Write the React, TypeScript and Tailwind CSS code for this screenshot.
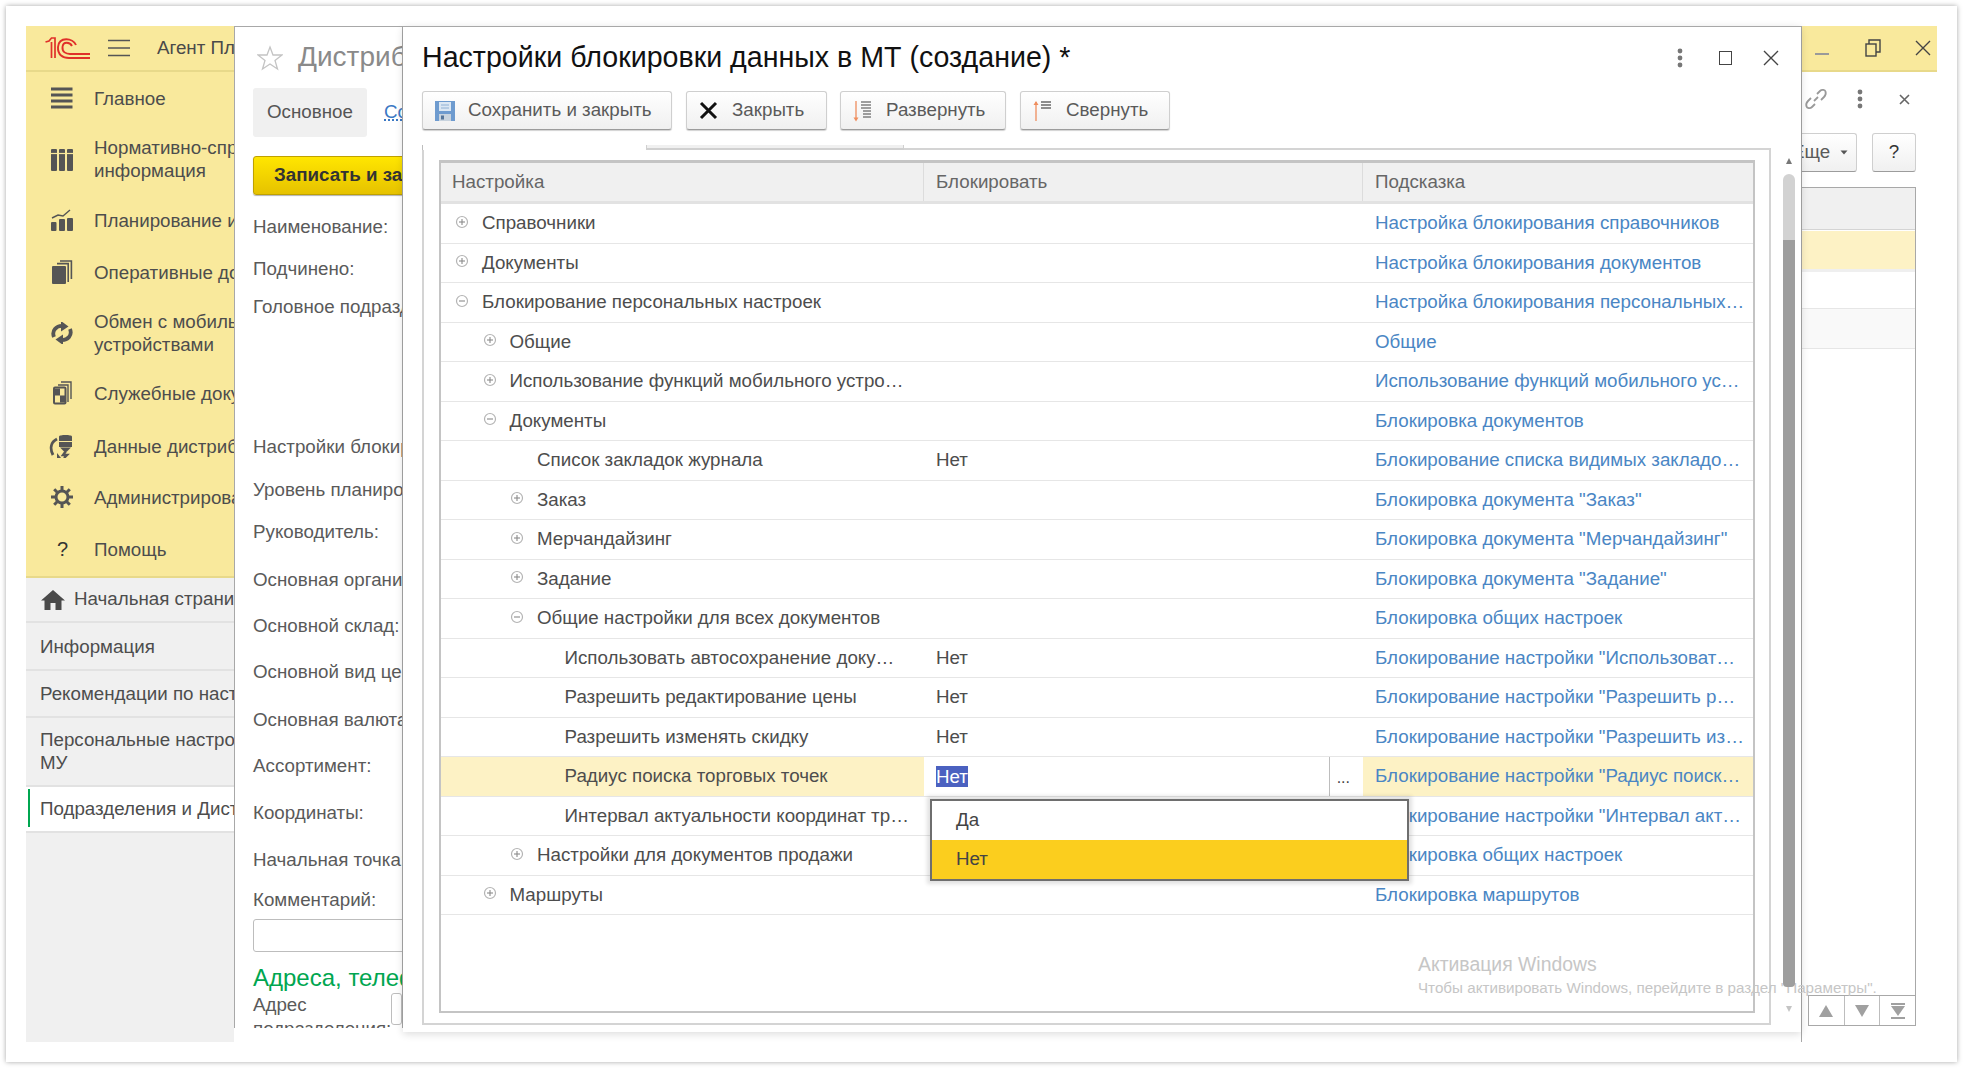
import React from 'react';

const FONT = "font-['Liberation_Sans',Arial,sans-serif]";

function Logo() {
  return (
    <svg width="46" height="24" viewBox="0 0 46 24" fill="none" className="shrink-0">
      <path d="M0.5 6 L4 5 L6.5 2 H10 V22" stroke="#e0302a" strokeWidth="1.7" fill="none" />
      <path d="M6.5 6 V22" stroke="#e0302a" strokeWidth="1.7" fill="none" />
      <path d="M31 9 C28 2 14 0 13 11 C12.5 19 18 22 24 22 H45" stroke="#e0302a" strokeWidth="1.9" fill="none" />
      <path d="M27 10 C25 6 18 5 17.5 11 C17 16 21 18 25 18 H45" stroke="#e0302a" strokeWidth="1.9" fill="none" />
    </svg>
  );
}

function Burger() {
  return (
    <svg width="22" height="18" viewBox="0 0 22 18" className="shrink-0">
      <path d="M0 1.5H22M0 9H22M0 16.5H22" stroke="#555" strokeWidth="1.6" />
    </svg>
  );
}

const ic = '#555555';
const SideIcons: Record<string, React.ReactNode> = {
  main: (
    <svg width="22" height="22" viewBox="0 0 22 22"><path d="M0 2h21.5M0 8h21.5M0 14h21.5M0 20h21.5" stroke={ic} strokeWidth="3" /></svg>
  ),
  norm: (
    <svg width="22" height="22" viewBox="0 0 22 22" fill={ic}><rect y="0" width="6" height="22" rx="1" /><rect x="8" y="0" width="6" height="22" rx="1" /><rect x="16" y="0" width="6" height="22" rx="1" /><path d="M0 4.5h22" stroke="#f9e99c" strokeWidth="1.2" /></svg>
  ),
  plan: (
    <svg width="22" height="22" viewBox="0 0 22 22" fill={ic}><rect y="13" width="5.5" height="9" rx="1" /><rect x="8" y="10" width="6" height="12" rx="1" /><rect x="16" y="9" width="6" height="13" rx="1" /><path d="M1 9L7 6L12 7L19 1" stroke={ic} strokeWidth="1.4" fill="none" /></svg>
  ),
  oper: (
    <svg width="22" height="24" viewBox="0 0 22 24" fill={ic}><rect x="1" y="6" width="14" height="18" rx="1" /><path d="M17.2 22V3.6H6" stroke={ic} strokeWidth="1.6" fill="none" /><path d="M20.4 19V1H9" stroke={ic} strokeWidth="1.6" fill="none" /></svg>
  ),
  sync: (
    <svg width="22" height="22" viewBox="0 0 22 22" fill="none" stroke={ic} strokeWidth="3.8"><path d="M3 15C0.5 9 5 3.5 12 4" /><path d="M10 -1L17.5 4.5L10 9.5Z" fill={ic} stroke="none" /><path d="M19 7C21.5 13 17 18.5 10 18" /><path d="M12 23L4.5 17.5L12 12.5Z" fill={ic} stroke="none" /></svg>
  ),
  serv: (
    <svg width="22" height="24" viewBox="0 0 22 24" fill="none" stroke={ic} className="ml-[2px]"><rect x="1" y="6.5" width="11.5" height="16" rx="1" strokeWidth="2" /><rect x="2" y="7.5" width="5" height="7" fill={ic} stroke="none" /><rect x="7" y="14.5" width="5" height="7" fill={ic} stroke="none" /><path d="M15 21V4H5" strokeWidth="1.4" /><path d="M18 18V1H8" strokeWidth="1.4" /></svg>
  ),
  data: (
    <svg width="24" height="24" viewBox="0 0 24 24" fill={ic} className="-ml-[2px]"><path d="M10 2.5C10 0.5 23 0.5 23 2.5V7H10Z" /><rect x="10" y="8" width="13" height="5" /><path d="M11 13.5h11l-4 4h-3z" /><path d="M8 5C2 8 0.5 14 4 21" stroke={ic} strokeWidth="2.8" fill="none" /><path d="M8 19V24H12Z" /><path d="M17 17L14 21H18L15 24" stroke={ic} strokeWidth="2.4" fill="none" /></svg>
  ),
  gear: (
    <svg width="22" height="22" viewBox="0 0 22 22" fill="none" stroke={ic}><circle cx="11" cy="11" r="6" strokeWidth="3" /><path d="M11 0v5M11 17v5M0 11h5M17 11h5M3.2 3.2l3.5 3.5M15.3 15.3l3.5 3.5M18.8 3.2l-3.5 3.5M6.7 15.3l-3.5 3.5" strokeWidth="3" /></svg>
  ),
};

const sideItems = [
  { k: 'main', h: 'h-[52px]', c: '', t: ['Главное'] },
  { k: 'norm', h: 'h-[72px]', c: 'mb-[2px]', t: ['Нормативно-справочная', 'информация'] },
  { k: 'plan', h: 'h-[48px]', c: '', t: ['Планирование и контроль'] },
  { k: 'oper', h: 'h-[56px]', c: '', t: ['Оперативные документы'] },
  { k: 'sync', h: 'h-[66px]', c: '', t: ['Обмен с мобильными', 'устройствами'] },
  { k: 'serv', h: 'h-[54px]', c: '', t: ['Служебные документы'] },
  { k: 'data', h: 'h-[52px]', c: '', t: ['Данные дистрибьюторов'] },
  { k: 'gear', h: 'h-[50px]', c: '', t: ['Администрирование'] },
  { k: 'help', h: 'h-[54px]', c: '', t: ['Помощь'] },
];

const navItems = [
  { t: ['Информация'], h: 'h-[48px]', c: '' },
  { t: ['Рекомендации по настройке'], h: 'h-[47px]', c: '' },
  { t: ['Персональные настройки', 'МУ'], h: 'h-[69px]', c: 'mb-[2px]' },
];

function Sidebar() {
  return (
    <div className="w-[208px] shrink-0 h-full bg-[#f0f0f0] flex flex-col overflow-hidden whitespace-nowrap">
      <div className="bg-[#f9e99c]">
        <div className="h-[46px] flex items-center border-b-2 border-[#e8d98a] pl-[19px]">
          <Logo />
          <div className="ml-[17px]"><Burger /></div>
          <span className="ml-[27px] text-[#4a4a4a]">Агент Плюс</span>
        </div>
        {sideItems.map((s) => (
          <div key={s.k} className={`${s.h} flex items-center text-[#4d4d4d]`}>
            <div className="w-[68px] pl-[25px] shrink-0 flex items-center">
              {s.k === 'help' ? <span className="pl-[6px] text-[#333] text-[20px]">?</span> : SideIcons[s.k]}
            </div>
            <div className={`leading-[23px] ${s.c}`}>
              {s.t.map((l) => <div key={l}>{l}</div>)}
            </div>
          </div>
        ))}
      </div>
      <div className="h-[47px] flex items-center border-t-[2px] border-b-[2px] border-t-[#e8d98a] border-b-[#e2e2e2] pl-[15px] gap-[9px] text-[#4d4d4d]">
        <svg width="24" height="20" viewBox="0 0 24 20" fill="#4a4a4a" className="shrink-0"><path d="M12 0L24 10.5H20.5V20H14.5V13H9.5V20H3.5V10.5H0Z" /></svg>
        <span>Начальная страница</span>
      </div>
      {navItems.map((n) => (
        <div key={n.t[0]} className={`${n.h} flex items-center border-b-[2px] border-[#e2e2e2] pl-[14px] leading-[23px] text-[#4d4d4d]`}>
          <div className={n.c}>{n.t.map((l) => <div key={l}>{l}</div>)}</div>
        </div>
      ))}
      <div className="h-[46px] bg-white flex items-center border-b-[2px] border-[#e2e2e2] pl-[14px] text-[#4d4d4d] relative">
        <div className="absolute left-[2px] top-[2px] bottom-[4px] w-[2px] bg-[#00a650]" />
        Подразделения и Дистрибьюторы
      </div>
    </div>
  );
}

const formLabels = [
  { t: 'Наименование:', c: 'h-[42px]' },
  { t: 'Подчинено:', c: 'h-[42px]' },
  { t: 'Головное подразделение:', c: 'h-[34px] mb-[100px]' },
  { t: 'Настройки блокировки:', c: 'h-[46px]' },
  { t: 'Уровень планирования:', c: 'h-[40px]' },
  { t: 'Руководитель:', c: 'h-[44px]' },
  { t: 'Основная организация:', c: 'h-[52px]' },
  { t: 'Основной склад:', c: 'h-[40px]' },
  { t: 'Основной вид цен:', c: 'h-[52px]' },
  { t: 'Основная валюта:', c: 'h-[44px]' },
  { t: 'Ассортимент:', c: 'h-[48px]' },
  { t: 'Координаты:', c: 'h-[46px]' },
  { t: 'Начальная точка:', c: 'h-[48px]' },
  { t: 'Комментарий:', c: 'h-[32px]' },
];

function FormWindow() {
  return (
    <div className="w-[169px] shrink-0 h-[1002px] bg-white border-l border-r border-t border-[#a8a8a8] overflow-hidden whitespace-nowrap text-[#5a5a5a] relative">
      <div className="h-[61px] flex items-center pl-[22px] gap-[15px]">
        <svg width="26" height="26" viewBox="0 0 26 26" fill="none" className="shrink-0"><path d="M13 2L16 10H25L18 15.5L20.5 24L13 19L5.5 24L8 15.5L1 10H10Z" stroke="#c4c4c4" strokeWidth="1.3" /></svg>
        <span className="text-[28px] text-[#8a8a8a] -mt-[2px]">Дистрибьютор</span>
      </div>
      <div className="flex items-center h-[49px] ml-[18px]">
        <div className="w-[114px] h-[49px] shrink-0 bg-[#f0f0f0] rounded-[3px] flex items-center justify-center text-[#555]">Основное</div>
        <span className="ml-[17px] text-[#3b78c4] underline decoration-dotted">Сотрудники</span>
      </div>
      <div className="ml-[18px] mt-[19px] w-[200px] h-[39px] rounded-[3px] bg-gradient-to-b from-[#ffe600] to-[#e6c200] border border-[#bfa100] shadow-[0_1px_1px_rgba(0,0,0,0.3)] flex items-center pl-[20px] font-bold text-[#333]">Записать и закрыть</div>
      <div className="mt-[11px] ml-[18px]">
        {formLabels.map((l) => (
          <div key={l.t} className={`${l.c} flex items-center`}>{l.t}</div>
        ))}
      </div>
      <div className="ml-[18px] mt-[3px] w-[200px] h-[33px] border border-[#bdbdbd] rounded-[3px]" />
      <div className="ml-[18px] mt-[8px] h-[36px] flex items-center text-[24px] text-[#00a650]">Адреса, телефоны</div>
      <div className="ml-[18px] flex -mt-[3px]">
        <div className="w-[145px] leading-[24px]">Адрес<br />подразделения:</div>
        <div className="w-[40px] h-[32px] border border-[#bdbdbd] rounded-[3px]" />
      </div>
    </div>
  );
}

function Btn({ w, icon, label, gap }: { w: string; icon: React.ReactNode; label: string; gap: string }) {
  return (
    <div className={`${w} h-[39px] rounded-[3px] border border-[#cfcfcf] border-b-[#9c9c9c] bg-gradient-to-b from-white to-[#f0f0f0] shadow-[0_1px_1px_rgba(0,0,0,0.18)] flex items-center pl-[12px] ${gap} text-[#5a5a5a]`}>
      {icon}
      <span>{label}</span>
    </div>
  );
}

type Row = { l: number; t: string; v?: string; h: string; s?: '+' | '-'; sel?: boolean };
const rows: Row[] = [
  { l: 0, s: '+', t: 'Справочники', h: 'Настройка блокирования справочников' },
  { l: 0, s: '+', t: 'Документы', h: 'Настройка блокирования документов' },
  { l: 0, s: '-', t: 'Блокирование персональных настроек', h: 'Настройка блокирования персональных…' },
  { l: 1, s: '+', t: 'Общие', h: 'Общие' },
  { l: 1, s: '+', t: 'Использование функций мобильного устро…', h: 'Использование функций мобильного ус…' },
  { l: 1, s: '-', t: 'Документы', h: 'Блокировка документов' },
  { l: 2, t: 'Список закладок журнала', v: 'Нет', h: 'Блокирование списка видимых закладо…' },
  { l: 2, s: '+', t: 'Заказ', h: 'Блокировка документа "Заказ"' },
  { l: 2, s: '+', t: 'Мерчандайзинг', h: 'Блокировка документа "Мерчандайзинг"' },
  { l: 2, s: '+', t: 'Задание', h: 'Блокировка документа "Задание"' },
  { l: 2, s: '-', t: 'Общие настройки для всех документов', h: 'Блокировка общих настроек' },
  { l: 3, t: 'Использовать автосохранение доку…', v: 'Нет', h: 'Блокирование настройки "Использоват…' },
  { l: 3, t: 'Разрешить редактирование цены', v: 'Нет', h: 'Блокирование настройки "Разрешить р…' },
  { l: 3, t: 'Разрешить изменять скидку', v: 'Нет', h: 'Блокирование настройки "Разрешить из…' },
  { l: 3, t: 'Радиус поиска торговых точек', v: 'Нет', h: 'Блокирование настройки "Радиус поиск…', sel: true },
  { l: 3, t: 'Интервал актуальности координат тр…', h: 'Блокирование настройки "Интервал акт…' },
  { l: 2, s: '+', t: 'Настройки для документов продажи', h: 'Блокировка общих настроек' },
  { l: 1, s: '+', t: 'Маршруты', h: 'Блокировка маршрутов' },
];
const levelPad = ['pl-[14px]', 'pl-[41.5px]', 'pl-[69px]', 'pl-[96.5px]'];

function Tree({ s }: { s?: '+' | '-' }) {
  return (
    <svg width="14" height="14" viewBox="0 0 14 14" className="shrink-0 mr-[13px] mb-[3px]">
      {s && <circle cx="7" cy="7" r="5.5" fill="none" stroke="#b4b4b4" strokeWidth="1.2" />}
      {s && <path d="M4 7H10" stroke="#8a8a8a" strokeWidth="1.1" />}
      {s === '+' && <path d="M7 4V10" stroke="#8a8a8a" strokeWidth="1.1" />}
    </svg>
  );
}

function TableRow({ r }: { r: Row }) {
  return (
    <div className="h-[39.5px] border-b border-[#e6e6e6] flex items-stretch">
      <div className={`w-[483px] shrink-0 flex items-center ${levelPad[r.l]} ${r.sel ? 'bg-[#fdf2c5]' : ''} text-[#4d4d4d] whitespace-nowrap`}>
        <Tree s={r.s} />
        <span>{r.t}</span>
      </div>
      {r.sel ? (
        <div className="w-[439px] shrink-0 flex items-center pl-[12px] bg-white relative">
          <span className="bg-[#4b61c0] text-white leading-[21px]">Нет</span>
          <div className="absolute right-[33px] top-0 bottom-0 w-px bg-[#bdbdbd]" />
          <span className="absolute right-[13px] top-[9px] text-[#444] text-[16px]">...</span>
        </div>
      ) : (
        <div className="w-[439px] shrink-0 flex items-center pl-[12px] text-[#4d4d4d]">{r.v}</div>
      )}
      <div className={`flex-1 min-w-0 flex items-center pl-[12px] text-[#4a86c4] whitespace-nowrap ${r.sel ? 'bg-[#fdf2c5]' : ''}`}>
        {r.h}
      </div>
    </div>
  );
}

function Modal() {
  return (
    <div className="w-[1398px] shrink-0 h-[1006px] bg-white border-t border-[#a8a8a8] relative z-10 shadow-[0_2px_8px_rgba(0,0,0,0.14)] whitespace-nowrap">
      <div className="h-[64px] flex items-center pl-[19px] pr-[22px]">
        <span className="text-[28.6px] text-[#111] -mt-[4px]">Настройки блокировки данных в МТ (создание) *</span>
        <div className="ml-auto flex items-center mb-[2px]">
          <svg width="6" height="20" viewBox="0 0 6 20" fill="#777"><circle cx="3" cy="3" r="2.4" /><circle cx="3" cy="10" r="2.4" /><circle cx="3" cy="17" r="2.4" /></svg>
          <div className="ml-[36px] w-[13px] h-[14px] border-[1.5px] border-[#444]" />
          <svg width="16" height="16" viewBox="0 0 16 16" className="ml-[31px]"><path d="M1 1L15 15M15 1L1 15" stroke="#444" strokeWidth="1.4" /></svg>
        </div>
      </div>
      <div className="flex ml-[19px] h-[40px]">
        <Btn w="w-[250px]" gap="gap-[13px]" label="Сохранить и закрыть" icon={
          <svg width="20" height="22" viewBox="0 0 20 22" className="shrink-0"><path d="M0 1H20V21H0Z" fill="#6e9bcf" /><rect x="4" y="2" width="12" height="9" fill="#dbe7f3" /><path d="M6 5H14M6 8H14" stroke="#8fb0d4" /><rect x="4" y="14" width="12" height="7" fill="#c8d3de" /><rect x="6" y="15.5" width="3" height="4" fill="#55759a" /></svg>
        } />
        <Btn w="w-[141px] ml-[14px]" gap="gap-[14px]" label="Закрыть" icon={
          <svg width="19" height="19" viewBox="0 0 19 19" className="shrink-0"><path d="M2 2L17 17M17 2L2 17" stroke="#111" strokeWidth="3" /></svg>
        } />
        <Btn w="w-[166px] ml-[13px]" gap="gap-[13px]" label="Развернуть" icon={
          <svg width="20" height="22" viewBox="0 0 20 22" className="shrink-0"><path d="M3 1V20" stroke="#ef8d5d" strokeWidth="1.3" /><path d="M0.5 17.5L3 21.5L5.5 17.5Z" fill="#ef8d5d" /><path d="M8 2H18M8 5H18M8 8H18M10 11H18M10 14H18M10 17H18" stroke="#808080" strokeWidth="1.4" /></svg>
        } />
        <Btn w="w-[150px] ml-[14px]" gap="gap-[13px]" label="Свернуть" icon={
          <svg width="20" height="22" viewBox="0 0 20 22" className="shrink-0"><path d="M3 2V21" stroke="#ef8d5d" strokeWidth="1.3" /><path d="M0.5 5L3 1L5.5 5Z" fill="#ef8d5d" /><path d="M8 2H18M8 5H18M8 8H18" stroke="#6a6a6a" strokeWidth="1.5" /></svg>
        } />
      </div>
      <div className="flex ml-[19px] mt-[14px] h-[5px]">
        <div className="w-[224px] border-l border-[#bdbdbd]" />
        <div className="w-[258px] bg-[#f0f0f0] border-l border-r border-b-[2px] border-[#d0d0d0]" />
        <div className="w-[867px] border-b-[2px] border-[#d4d4d4]" />
      </div>
      <div className="flex">
        <div className="ml-[19px] w-[1349px] h-[875px] border-l-[2px] border-r-[2px] border-b-[2px] border-[#d4d4d4] pl-[15px] pr-[14px] pt-[10px]">
          <div className="h-[853px] border-[2px] border-t-[3px] border-[#c4c4c4] relative overflow-visible">
            <div className="h-[41px] bg-[#f0f0f0] border-b-[3px] border-[#e2e2e2] flex text-[#666]">
              <div className="w-[483px] border-r border-[#dcdcdc] flex items-center pl-[11px]">Настройка</div>
              <div className="w-[439px] border-r border-[#dcdcdc] flex items-center pl-[12px]">Блокировать</div>
              <div className="flex-1 flex items-center pl-[12px]">Подсказка</div>
            </div>
            {rows.map((r) => <TableRow key={r.t + r.h} r={r} />)}
            <div className="absolute left-[489px] top-[636px] w-[479px] h-[82px] bg-white border-[2px] border-[#6e6e6e] shadow-[0_0_4px_3px_rgba(0,0,0,0.12)]">
              <div className="h-[39px] flex items-center pl-[24px] text-[#444]">Да</div>
              <div className="h-[39px] bg-[#fbce1e] flex items-center pl-[24px] text-[#444]">Нет</div>
            </div>
            <div className="absolute left-[977px] top-[787px] text-[#c6c6c6] pointer-events-none">
              <div className="text-[19.4px]">Активация Windows</div>
              <div className="text-[15.2px] -mt-[2px]">Чтобы активировать Windows, перейдите в раздел "Параметры".</div>
            </div>
          </div>
        </div>
        <div className="ml-[12px] w-[12px] flex flex-col items-center relative">
          <svg width="8" height="8" viewBox="0 0 8 8" className="absolute top-[7px]"><path d="M4 1L7 7H1Z" fill="#777" /></svg>
          <div className="absolute top-[24px] w-[12px] h-[66px] bg-[#d2d2d2] rounded-t-[6px]" />
          <div className="absolute top-[90px] w-[12px] h-[747px] bg-[#9e9e9e] rounded-b-[4px]" />
          <svg width="8" height="8" viewBox="0 0 8 8" className="absolute top-[855px]"><path d="M4 7L7 1H1Z" fill="#c4c4c4" /></svg>
        </div>
      </div>
    </div>
  );
}

function RightWindow() {
  return (
    <div className="flex-1 min-w-0 h-full border-l border-[#a8a8a8] overflow-hidden whitespace-nowrap relative bg-white">
      <div className="h-[46px] bg-[#f9e99c] border-b-2 border-[#e8d98a] flex items-center pl-[13px]">
        <div className="w-[14px] h-[2px] bg-[#9a9a9a] mt-[12px]" />
        <svg width="16" height="18" viewBox="0 0 16 18" fill="none" stroke="#444" strokeWidth="1.4" className="ml-[36px]"><rect x="1" y="5" width="10" height="12" /><path d="M4 5V1H15V13H11" /></svg>
        <svg width="16" height="16" viewBox="0 0 16 16" className="ml-[34px]"><path d="M1 1L15 15M15 1L1 15" stroke="#444" strokeWidth="1.4" /></svg>
      </div>
      <div className="h-[54px] flex items-center pl-[2px]">
        <svg width="24" height="24" viewBox="0 0 24 24" fill="none" stroke="#9a9a9a" strokeWidth="1.8"><path d="M10 14L14 10" /><path d="M13 7L16 4C18 2 21 3 21.5 4.5C22 6 22 8 20 10L17 13" /><path d="M11 17L8 20C6 22 3 21 2.5 19.5C2 18 2 16 4 14L7 11" /></svg>
        <svg width="6" height="20" viewBox="0 0 6 20" fill="#777" className="ml-[29px]"><circle cx="3" cy="3" r="2.4" /><circle cx="3" cy="10" r="2.4" /><circle cx="3" cy="17" r="2.4" /></svg>
        <svg width="11" height="11" viewBox="0 0 11 11" className="ml-[36px]"><path d="M1 1L10 10M10 1L1 10" stroke="#666" strokeWidth="1.6" /></svg>
      </div>
      <div className="flex mt-[7px] h-[39px] items-stretch">
        <div className="-ml-[20px] w-[75px] shrink-0 rounded-[3px] border border-[#cfcfcf] border-b-[#9c9c9c] bg-gradient-to-b from-white to-[#f0f0f0] flex items-center pl-[9px] text-[#5a5a5a]">
          Еще
          <svg width="8" height="5" viewBox="0 0 8 5" className="ml-[10px]"><path d="M0.5 0.5H7.5L4 4.5Z" fill="#555" /></svg>
        </div>
        <div className="ml-[15px] w-[44px] rounded-[3px] border border-[#cfcfcf] border-b-[#9c9c9c] bg-gradient-to-b from-white to-[#f0f0f0] flex items-center justify-center text-[#333]">?</div>
      </div>
      <div className="mt-[15px] w-[114px] h-[808px] border-t border-r border-[#a8a8a8] flex flex-col">
        <div className="h-[42px] bg-[#f0f0f0] border-b border-[#d4d4d4] shrink-0" />
        <div className="h-[38px] bg-[#fdf2c5] mt-[1px] shrink-0" />
        <div className="h-[40px] border-t-[3px] border-[#efefef] border-b border-b-[#e6e6e6] shrink-0" />
        <div className="h-[40px] bg-[#f9f9f9] border-b border-[#e6e6e6] shrink-0" />
      </div>
      <div className="ml-[6px] w-[108px] h-[31px] border border-[#a8a8a8] flex">
        <div className="flex-1 border-r border-[#bdbdbd] flex items-center justify-center">
          <svg width="16" height="14" viewBox="0 0 16 14"><path d="M8 1L15 13H1Z" fill="#a0a0a0" /></svg>
        </div>
        <div className="flex-1 border-r border-[#bdbdbd] flex items-center justify-center">
          <svg width="16" height="14" viewBox="0 0 16 14"><path d="M8 13L15 1H1Z" fill="#a0a0a0" /></svg>
        </div>
        <div className="flex-1 flex items-center justify-center">
          <svg width="16" height="16" viewBox="0 0 16 16"><path d="M8 13L15 3H1Z" fill="#a0a0a0" /><path d="M1 1H15M1 15H15" stroke="#a0a0a0" strokeWidth="2" /></svg>
        </div>
      </div>
    </div>
  );
}

export default function App() {
  return (
    <div className={`w-[1963px] h-[1068px] bg-white overflow-hidden pl-[6px] pt-[6px] ${FONT} text-[18.75px]`}>
      <div className="w-[1951px] h-[1056px] bg-white shadow-[0_0_5px_rgba(0,0,0,0.35)] pl-[20px] pt-[20px]">
        <div className="w-[1911px] h-[1016px] flex items-start bg-white">
          <Sidebar />
          <FormWindow />
          <Modal />
          <RightWindow />
        </div>
      </div>
    </div>
  );
}
